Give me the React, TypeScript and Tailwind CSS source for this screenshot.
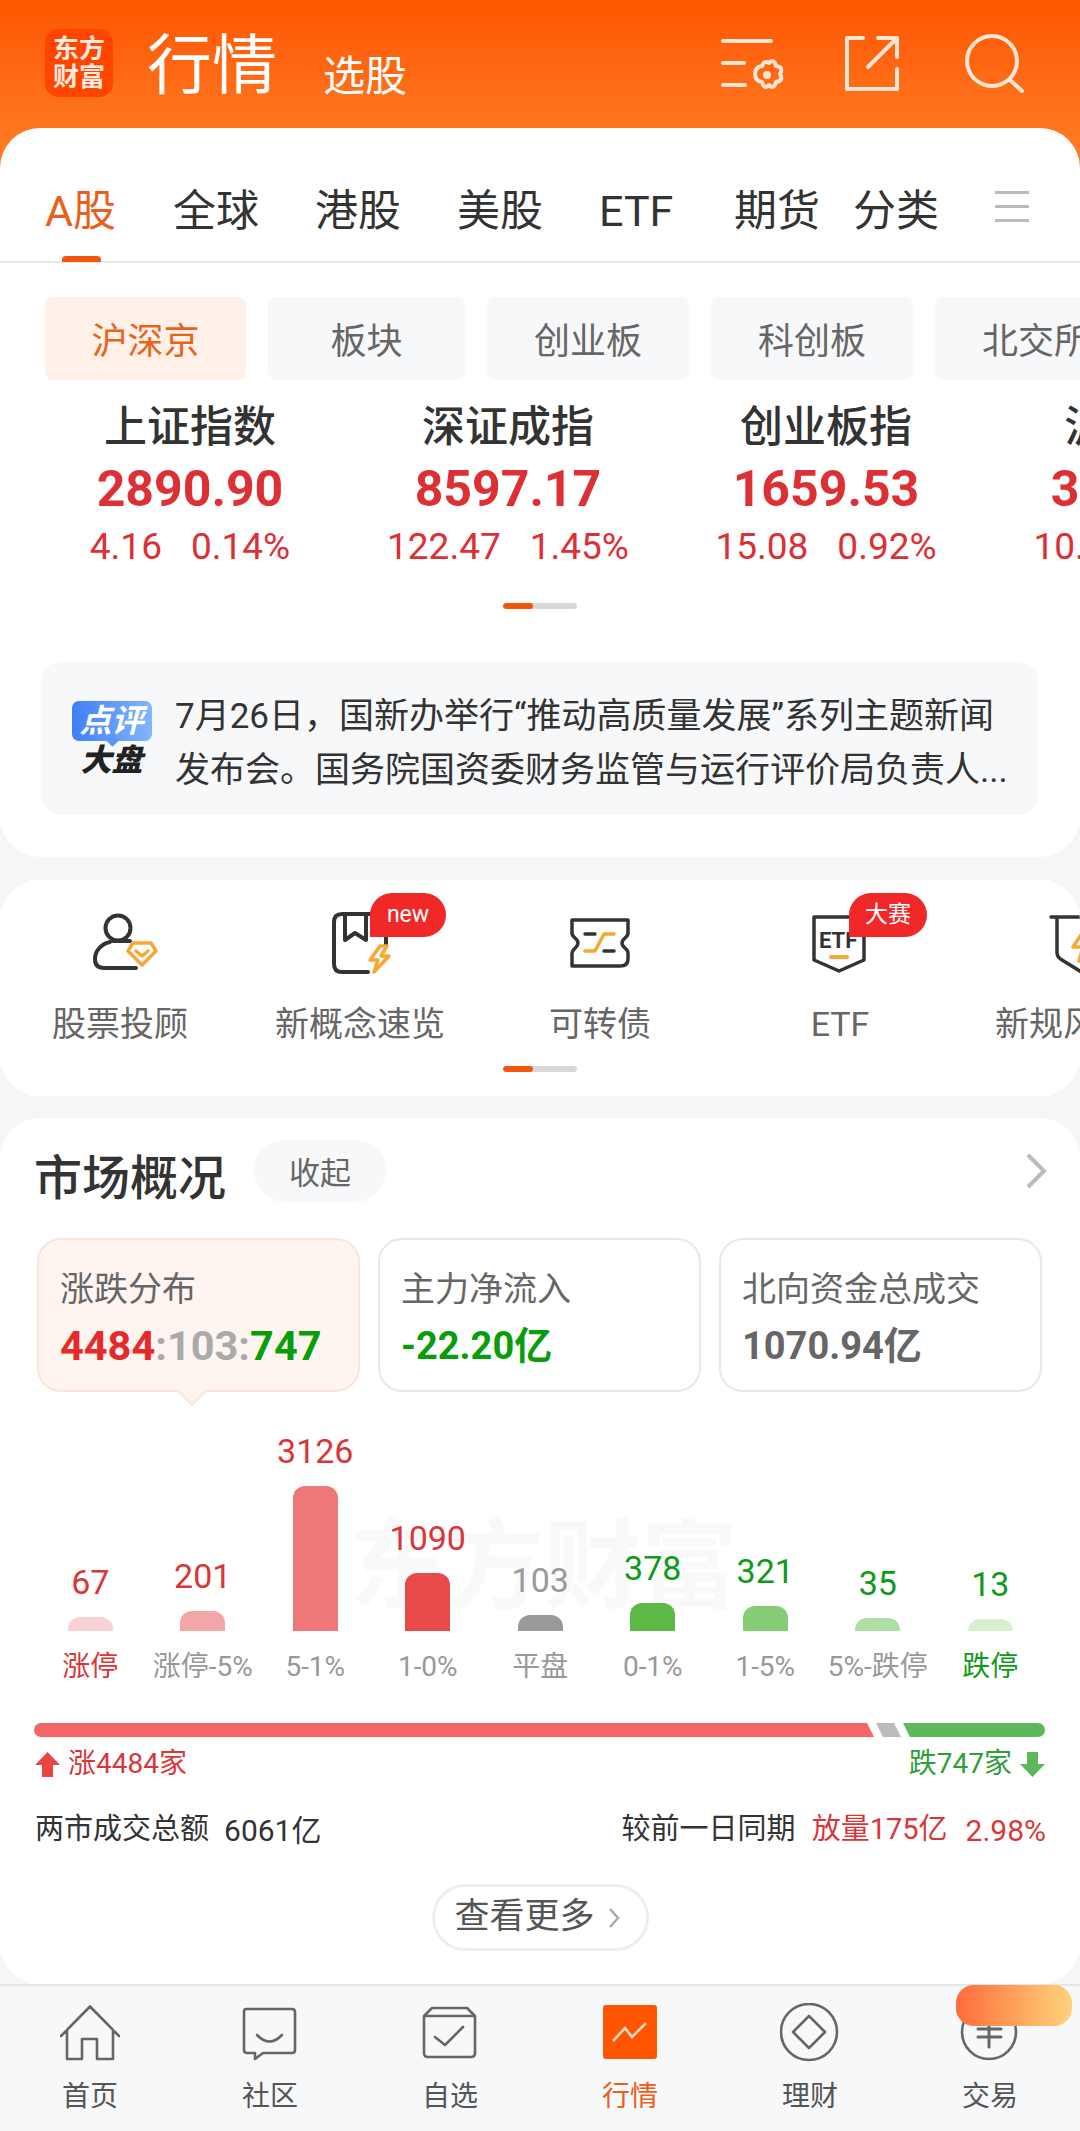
import type { ReactNode } from 'react';

const font = "font-['Roboto','Noto_Sans_CJK_SC',sans-serif]";

const chips = [
  { label: '板块', w: 'w-[197px]' },
  { label: '创业板', w: 'w-[202px]' },
  { label: '科创板', w: 'w-[202px]' },
  { label: '北交所', w: 'w-[202px]' },
];
const indices = [
  { name: '上证指数', value: '2890.90', change: '4.16', pct: '0.14%' },
  { name: '深证成指', value: '8597.17', change: '122.47', pct: '1.45%' },
  { name: '创业板指', value: '1659.53', change: '15.08', pct: '0.92%' },
  { name: '沪深300', value: '3370.48', change: '10.44', pct: '0.31%' },
];
const bars = [
  { value: '67', h: 'h-[14px]', bar: 'bg-[#f9d3d3]', text: 'text-[#d9363a]', label: '涨停', labelColor: 'text-[#d9363a]' },
  { value: '201', h: 'h-[20px]', bar: 'bg-[#f3a5a8]', text: 'text-[#d9363a]', label: '涨停-5%', labelColor: 'text-[#999999]' },
  { value: '3126', h: 'h-[145px]', bar: 'bg-[#ee7777]', text: 'text-[#d9363a]', label: '5-1%', labelColor: 'text-[#999999]' },
  { value: '1090', h: 'h-[58px]', bar: 'bg-[#e84a4a]', text: 'text-[#d9363a]', label: '1-0%', labelColor: 'text-[#999999]' },
  { value: '103', h: 'h-[16px]', bar: 'bg-[#999999]', text: 'text-[#999999]', label: '平盘', labelColor: 'text-[#999999]' },
  { value: '378', h: 'h-[28px]', bar: 'bg-[#5cb946]', text: 'text-[#0f9a1a]', label: '0-1%', labelColor: 'text-[#999999]' },
  { value: '321', h: 'h-[25px]', bar: 'bg-[#85cc75]', text: 'text-[#0f9a1a]', label: '1-5%', labelColor: 'text-[#999999]' },
  { value: '35', h: 'h-[13px]', bar: 'bg-[#b0dfa5]', text: 'text-[#0f9a1a]', label: '5%-跌停', labelColor: 'text-[#999999]' },
  { value: '13', h: 'h-[12px]', bar: 'bg-[#d6efd0]', text: 'text-[#0f9a1a]', label: '跌停', labelColor: 'text-[#0f9a1a]' },
];

function Pager() {
  return (
    <div className="flex h-[6px] w-[74px] overflow-hidden rounded-full bg-[#d8d8d8]">
      <div className="w-[30px] rounded-full bg-[#f2560c]" />
    </div>
  );
}

function Badge({ children, pos }: { children: ReactNode; pos: string }) {
  return (
    <div className={`absolute flex h-[44px] items-center justify-center rounded-t-[22px] rounded-br-[22px] bg-[#f02828] text-[23px] text-white ${pos}`}>
      {children}
    </div>
  );
}

function FeatureIcon({ kind }: { kind: string }) {
  const dark = { fill: 'none', stroke: '#333', strokeWidth: 4, strokeLinecap: 'round', strokeLinejoin: 'round' } as const;
  const gold = { fill: 'none', stroke: '#f5a833', strokeWidth: 3.5, strokeLinecap: 'round', strokeLinejoin: 'round' } as const;
  return (
    <svg width="80" height="70" viewBox="0 0 80 70" className="overflow-visible">
      {kind === 'person' && (
        <g>
          <circle cx="38" cy="23" r="12.5" {...dark} />
          <path d="M30 37 C21 39 15 46 15 54 C15 60 18 63 24 63 H56 M33 36 H50" {...dark} />
          <path d="M53 38 H71 L76 46 L62 60 L48 46 Z M56 46 L62 51 L68 46" {...gold} />
        </g>
      )}
      {kind === 'book' && (
        <g>
          <path d="M48 67 H22 Q14 67 14 59 V17 Q14 9 22 9 H66 V40" {...dark} />
          <path d="M25 9 V35 L35 28 L46 35 V9" {...dark} />
          <path d="M60 41 L50 55 H58 L54 67 L69 51 H61 L67 41 Z" {...gold} />
        </g>
      )}
      {kind === 'ticket' && (
        <g>
          <path d="M12 15 H68 V28 C68 33 62 33 62 38 C62 43 68 43 68 48 V54 Q68 61 60 61 H12 V49 C12 43 18 43 18 38 C18 33 12 33 12 28 Z" {...dark} strokeWidth={3.5} />
          <path d="M25 29 H35 M44 46 H54" {...dark} strokeWidth={3.5} />
          <path d="M25 46 H35 L44 29 H54" {...gold} />
        </g>
      )}
      {kind === 'etf' && (
        <g transform="translate(3 0)">
          <path d="M11 12 H61 V55 L36 66 L11 55 Z" {...dark} strokeWidth={3.5} />
          <text x="16" y="43" fontSize="22" fontWeight="700" fill="#333" fontFamily="Roboto, sans-serif">ETF</text>
          <path d="M28 52 H44" {...gold} strokeWidth={4} />
        </g>
      )}
      {kind === 'rule' && (
        <g transform="translate(7 0)">
          <path d="M4 12 H60 M10 12 V48 Q10 52 15 55 L36 68" {...dark} strokeWidth={3.5} />
          <path d="M38 24 L26 42 H36 L32 56 L48 38 H38 L44 24 Z" {...gold} />
        </g>
      )}
    </svg>
  );
}

function NavIcon({ kind }: { kind: string }) {
  const s = { fill: 'none', stroke: '#666', strokeWidth: 2.6, strokeLinejoin: 'round', strokeLinecap: 'round' } as const;
  return (
    <svg width="60" height="60" viewBox="0 0 60 60">
      {kind === 'home' && <path d="M1 33 L30 3.5 L59 33 M7 27 V56 H22 V36 H37 V56 H53 V27" {...s} />}
      {kind === 'chat' && (
        <g>
          <path d="M6 6 H52 Q55 6 55 9 V47 Q55 50 52 50 H23 L15 56 V50 H7 Q4 50 4 47 V9 Q4 6 6 6 Z" {...s} />
          <path d="M17 32 Q29.5 45 42 32" {...s} />
        </g>
      )}
      {kind === 'check' && (
        <g>
          <path d="M4 13 L12 5 H47 L55 13 V50 Q55 54 51 54 H8 Q4 54 4 50 Z M4 13 H55" {...s} />
          <path d="M15 34 L25 42 L43 24" {...s} />
        </g>
      )}
      {kind === 'market' && (
        <g>
          <rect x="3" y="2" width="54" height="54" rx="3" fill="#ff5500" />
          <path d="M13 38 L25 25 L32 34 L46 20" fill="none" stroke="#ffd8c0" strokeWidth="2.6" />
        </g>
      )}
      {kind === 'wealth' && (
        <g>
          <circle cx="29" cy="29" r="28" {...s} />
          <path d="M29 13 L45 29 L29 45 L13 29 Z" {...s} />
        </g>
      )}
      {kind === 'trade' && (
        <g>
          <circle cx="29" cy="29" r="27" {...s} />
          <path d="M18 26 H41 M18 34 H41 M29 19 V44" {...s} strokeWidth={3} />
        </g>
      )}
    </svg>
  );
}

export default function App() {
  return (
    <div className={`relative flex h-[2131px] w-[1080px] flex-col overflow-hidden bg-[#f5f6f8] ${font}`}>
      {/* top bar */}
      <div className="h-[190px] shrink-0 bg-gradient-to-b from-[#ff5500] to-[#ff8428]">
        <div className="flex h-[128px] items-start pl-[45px]">
          <div className="mt-[29px] flex h-[68px] w-[68px] flex-col items-center justify-center rounded-[14px] bg-[#ff4500] text-[26px] leading-[28px] font-bold text-[#ffeadd]">
            <span>东方</span>
            <span>财富</span>
          </div>
          <div className="mt-[23px] ml-[34px] text-[65px] leading-[86px] text-white">行情</div>
          <div className="mt-[48px] ml-[46px] text-[42px] leading-[58px] text-white">选股</div>
          <svg width="340" height="90" viewBox="0 0 340 90" className="mt-[20px] ml-[293px] shrink-0" fill="none" stroke="#ffe6d4" strokeWidth="4" strokeLinecap="round" strokeLinejoin="round">
            <path d="M23 21 H71 M23 43 H44 M23 65 H45" />
            <path d="M55 54 Q55 47 62 46 Q64 40 69 43 Q74 38 76 46 Q84 47 80 54 Q84 61 76 62 Q74 70 69 65 Q64 70 62 62 Q55 61 55 54 Z" />
            <circle cx="67" cy="55" r="2" fill="#ffe6d4" />
            <path d="M163 18 H147 V69 H197 V49 M178 18 H197 V37 M197 18 L168 47" />
            <circle cx="292" cy="41" r="25" />
            <path d="M310 60 L322 71" />
          </svg>
        </div>
      </div>

      {/* first card */}
      <div className="-mt-[62px] h-[729px] shrink-0 rounded-[40px] bg-white">
        <div className="flex h-[135px] items-start border-b-2 border-[#e8e8e8] pt-[54px] pl-[45px] text-[43px] leading-[58px] text-[#333333]">
          <div className="relative mr-[57px] text-[#e8601c]">
            A股
            <div className="absolute top-[74px] left-[17px] h-[6px] w-[39px] rounded-t-[4px] bg-[#f2560c]" />
          </div>
          <div>全球</div>
          <div className="ml-[56px]">港股</div>
          <div className="ml-[56px]">美股</div>
          <div className="ml-[56px] w-[79px]">ETF</div>
          <div className="ml-[56px]">期货</div>
          <div className="ml-[33px]">分类</div>
          <div className="mt-[9px] ml-[56px] flex w-[34px] flex-col gap-[11px]">
            <div className="h-[3px] bg-[#bbbbbb]" />
            <div className="h-[3px] bg-[#bbbbbb]" />
            <div className="h-[3px] bg-[#bbbbbb]" />
          </div>
        </div>

        <div className="mt-[34px] flex gap-[22px] overflow-hidden pl-[45px] text-[36px]">
          <div className="flex h-[83px] w-[201px] shrink-0 items-center justify-center rounded-[8px] bg-[#fff0e8] pt-[6px] text-[#e8641b]">沪深京</div>
          {chips.map((c) => (
            <div key={c.label} className={`flex h-[83px] shrink-0 items-center justify-center rounded-[8px] bg-[#f7f8fa] pt-[6px] text-[#666666] ${c.w}`}>
              {c.label}
            </div>
          ))}
        </div>

        <div className="mt-[19px] flex pl-[31px]">
          {indices.map((x) => (
            <div key={x.name} className="flex w-[318px] shrink-0 flex-col items-center whitespace-nowrap">
              <div className="h-[56px] text-[43px] leading-[56px] font-medium text-[#333333]">{x.name}</div>
              <div className="mt-[2px] h-[64px] text-[50px] leading-[64px] font-bold text-[#dc3035]">{x.value}</div>
              <div className="mt-[4px] flex gap-[29px] text-[37px] leading-[44px] text-[#dc3035]">
                <span>{x.change}</span>
                <span>{x.pct}</span>
              </div>
            </div>
          ))}
        </div>

        <div className="mt-[34px] flex justify-center">
          <Pager />
        </div>

        <div className="mt-[53px] ml-[41px] flex h-[153px] w-[997px] items-center rounded-[20px] bg-[#f7f8fa] pl-[30px]">
          <div className="flex w-[81px] shrink-0 flex-col items-center italic">
            <div className="relative flex h-[40px] w-[80px] items-center justify-center rounded-[7px] bg-gradient-to-r from-[#3f7ff5] to-[#84b4ff] text-[32px] font-bold text-white">
              点评
              <div className="absolute -bottom-[4px] left-[36px] h-[9px] w-[9px] rotate-45 bg-[#5b93f8]" />
            </div>
            <div className="mt-[5px] text-[31px] leading-[30px] font-black text-[#222222]">大盘</div>
          </div>
          <div className="ml-[23px] pt-[10px] text-[35px] leading-[54px] whitespace-nowrap text-[#333333]">
            <div>7月26日，国新办举行“推动高质量发展”系列主题新闻</div>
            <div>发布会。国务院国资委财务监管与运行评价局负责人...</div>
          </div>
        </div>
      </div>

      {/* shortcut card */}
      <div className="mt-[23px] h-[216px] shrink-0 overflow-hidden rounded-[40px] bg-white">
        <div className="flex pt-[25px]">
          {[
            { kind: 'person', label: '股票投顾' },
            { kind: 'book', label: '新概念速览', badge: 'new', pos: 'top-[-12px] left-[50px] w-[76px]' },
            { kind: 'ticket', label: '可转债' },
            { kind: 'etf', label: 'ETF', badge: '大赛', pos: 'top-[-12px] left-[49px] w-[78px]' },
            { kind: 'rule', label: '新规风向标' },
          ].map((f) => (
            <div key={f.label} className="flex w-[240px] shrink-0 flex-col items-center whitespace-nowrap">
              <div className="relative h-[70px] w-[80px]">
                <FeatureIcon kind={f.kind} />
                {f.badge && <Badge pos={f.pos}>{f.badge}</Badge>}
              </div>
              <div className="mt-[24px] text-[34px] leading-[50px] text-[#666666]">{f.label}</div>
            </div>
          ))}
        </div>
        <div className="mt-[17px] flex justify-center">
          <Pager />
        </div>
      </div>

      {/* market overview */}
      <div className="relative mt-[22px] min-h-0 flex-1 rounded-[40px] bg-white">
        <div className="flex items-start pt-[22px] pl-[34px]">
          <div className="pt-[8px] text-[48px] leading-[62px] font-medium text-[#333333]">市场概况</div>
          <div className="ml-[28px] flex h-[62px] w-[132px] items-center justify-center rounded-full bg-[#f7f8fa] pt-[6px] text-[31px] text-[#666666]">收起</div>
          <svg width="24" height="36" viewBox="0 0 24 36" fill="none" stroke="#bbbbbb" strokeWidth="4" className="mt-[13px] mr-[32px] ml-auto">
            <path d="M4 2 L20 18 L4 34" />
          </svg>
        </div>

        <div className="mt-[28px] flex gap-[18px] pl-[37px]">
          <div className="relative h-[154px] w-[323px] rounded-[24px] border-2 border-[#fbe4d8] bg-[#fff5f0] pt-[25px] pl-[21px]">
            <div className="text-[34px] leading-[48px] text-[#666666]">涨跌分布</div>
            <div className="mt-[9px] text-[41.5px] leading-[48px] font-bold whitespace-nowrap">
              <span className="text-[#e62a2a]">4484</span>
              <span className="text-[#aaaaaa]">:103:</span>
              <span className="text-[#0a9d0a]">747</span>
            </div>
            <div className="absolute -bottom-[12px] left-[143px] h-[20px] w-[20px] rotate-45 border-r-2 border-b-2 border-[#fbe4d8] bg-[#fff5f0]" />
          </div>
          <div className="h-[154px] w-[323px] rounded-[24px] border-2 border-[#e8e8e8] pt-[25px] pl-[21px]">
            <div className="text-[34px] leading-[48px] text-[#666666]">主力净流入</div>
            <div className="mt-[9px] text-[38px] leading-[48px] font-bold text-[#0a9d0a]">-22.20亿</div>
          </div>
          <div className="h-[154px] w-[323px] rounded-[24px] border-2 border-[#e8e8e8] pt-[25px] pl-[21px]">
            <div className="text-[34px] leading-[48px] text-[#666666]">北向资金总成交</div>
            <div className="mt-[9px] text-[38px] leading-[48px] font-bold text-[#666666]">1070.94亿</div>
          </div>
        </div>

        <div className="relative flex h-[239px] items-end pl-[34px]">
          <div className="absolute top-[120px] left-[350px] text-[97px] leading-[110px] font-bold text-[#f9f9f9]">东方财富</div>
          {bars.map((b) => (
            <div key={b.value} className="relative flex w-[112.5px] shrink-0 flex-col items-center">
              <div className={`mb-[17px] text-[34px] leading-[36px] ${b.text}`}>{b.value}</div>
              <div className={`w-[45px] rounded-t-[12px] ${b.h} ${b.bar}`} />
            </div>
          ))}
        </div>
        <div className="mt-[16px] flex pl-[34px]">
          {bars.map((b) => (
            <div key={b.label} className={`flex w-[112.5px] shrink-0 justify-center text-[28px] leading-[40px] whitespace-nowrap ${b.labelColor}`}>
              {b.label}
            </div>
          ))}
        </div>

        <div className="mt-[36px] flex h-[14px] gap-[2px] pl-[34px]">
          <div className="w-[840px] rounded-l-full bg-[#f46666] [clip-path:polygon(0_0,calc(100%-7px)_0,100%_100%,0_100%)]" />
          <div className="w-[25px] bg-[#bbbbbb] [clip-path:polygon(0_0,18px_0,100%_100%,7px_100%)]" />
          <div className="w-[142px] rounded-r-full bg-[#5cb85c] [clip-path:polygon(0_0,100%_0,100%_100%,7px_100%)]" />
        </div>
        <div className="mt-[9px] flex h-[36px] items-center justify-between pr-[35px] pl-[35px] text-[28px] leading-[36px]">
          <div className="flex items-center gap-[8px] text-[#d9363a]">
            <svg width="25" height="25" viewBox="0 0 25 25" fill="#e84545">
              <path d="M12.5 0 L25 13 H18 V25 H7 V13 H0 Z" />
            </svg>
            涨4484家
          </div>
          <div className="flex items-center gap-[8px] text-[#2f9e3a]">
            跌747家
            <svg width="25" height="25" viewBox="0 0 25 25" fill="#5cb85c">
              <path d="M12.5 25 L25 12 H18 V0 H7 V12 H0 Z" />
            </svg>
          </div>
        </div>

        <div className="mt-[28px] flex h-[40px] items-center justify-between pr-[34px] pl-[35px] text-[29px] whitespace-nowrap text-[#333333]">
          <div className="flex items-center gap-[15px]">
            <span>两市成交总额</span>
            <span className="text-[30px]">6061亿</span>
          </div>
          <div className="flex items-center">
            <span>较前一日同期</span>
            <span className="ml-[16px] text-[#d9363a]">放量175亿</span>
            <span className="ml-[18px] text-[30px] text-[#d9363a]">2.98%</span>
          </div>
        </div>

        <div className="mt-[34px] flex justify-center">
          <div className="flex h-[67px] w-[217px] items-center gap-[13px] rounded-full border-[3px] border-[#eeeeee] pl-[20px] text-[35px] text-[#555555]">
            查看更多
            <svg width="12" height="22" viewBox="0 0 12 22" fill="none" stroke="#aaaaaa" strokeWidth="2.5">
              <path d="M2 2 L10 11 L2 20" />
            </svg>
          </div>
        </div>
      </div>

      {/* bottom nav */}
      <div className="flex h-[147px] shrink-0 border-t-2 border-[#e6e6e6] bg-[#f7f8fa] pt-[17px]">
        {[
          { kind: 'home', label: '首页' },
          { kind: 'chat', label: '社区' },
          { kind: 'check', label: '自选' },
          { kind: 'market', label: '行情', active: true },
          { kind: 'wealth', label: '理财' },
          { kind: 'trade', label: '交易' },
        ].map((n) => (
          <div key={n.label} className="flex w-[180px] shrink-0 flex-col items-center">
            <NavIcon kind={n.kind} />
            <div className={`mt-[14px] text-[28px] leading-[40px] ${n.active ? 'text-[#e8601c]' : 'text-[#555555]'}`}>{n.label}</div>
          </div>
        ))}
      </div>

      {/* floating pill over the nav */}
      <div className="absolute top-[1985px] left-[956px] h-[41px] w-[116px] rounded-[18px] bg-gradient-to-r from-[#ff6a3a] to-[#ffd27a]" />
    </div>
  );
}
